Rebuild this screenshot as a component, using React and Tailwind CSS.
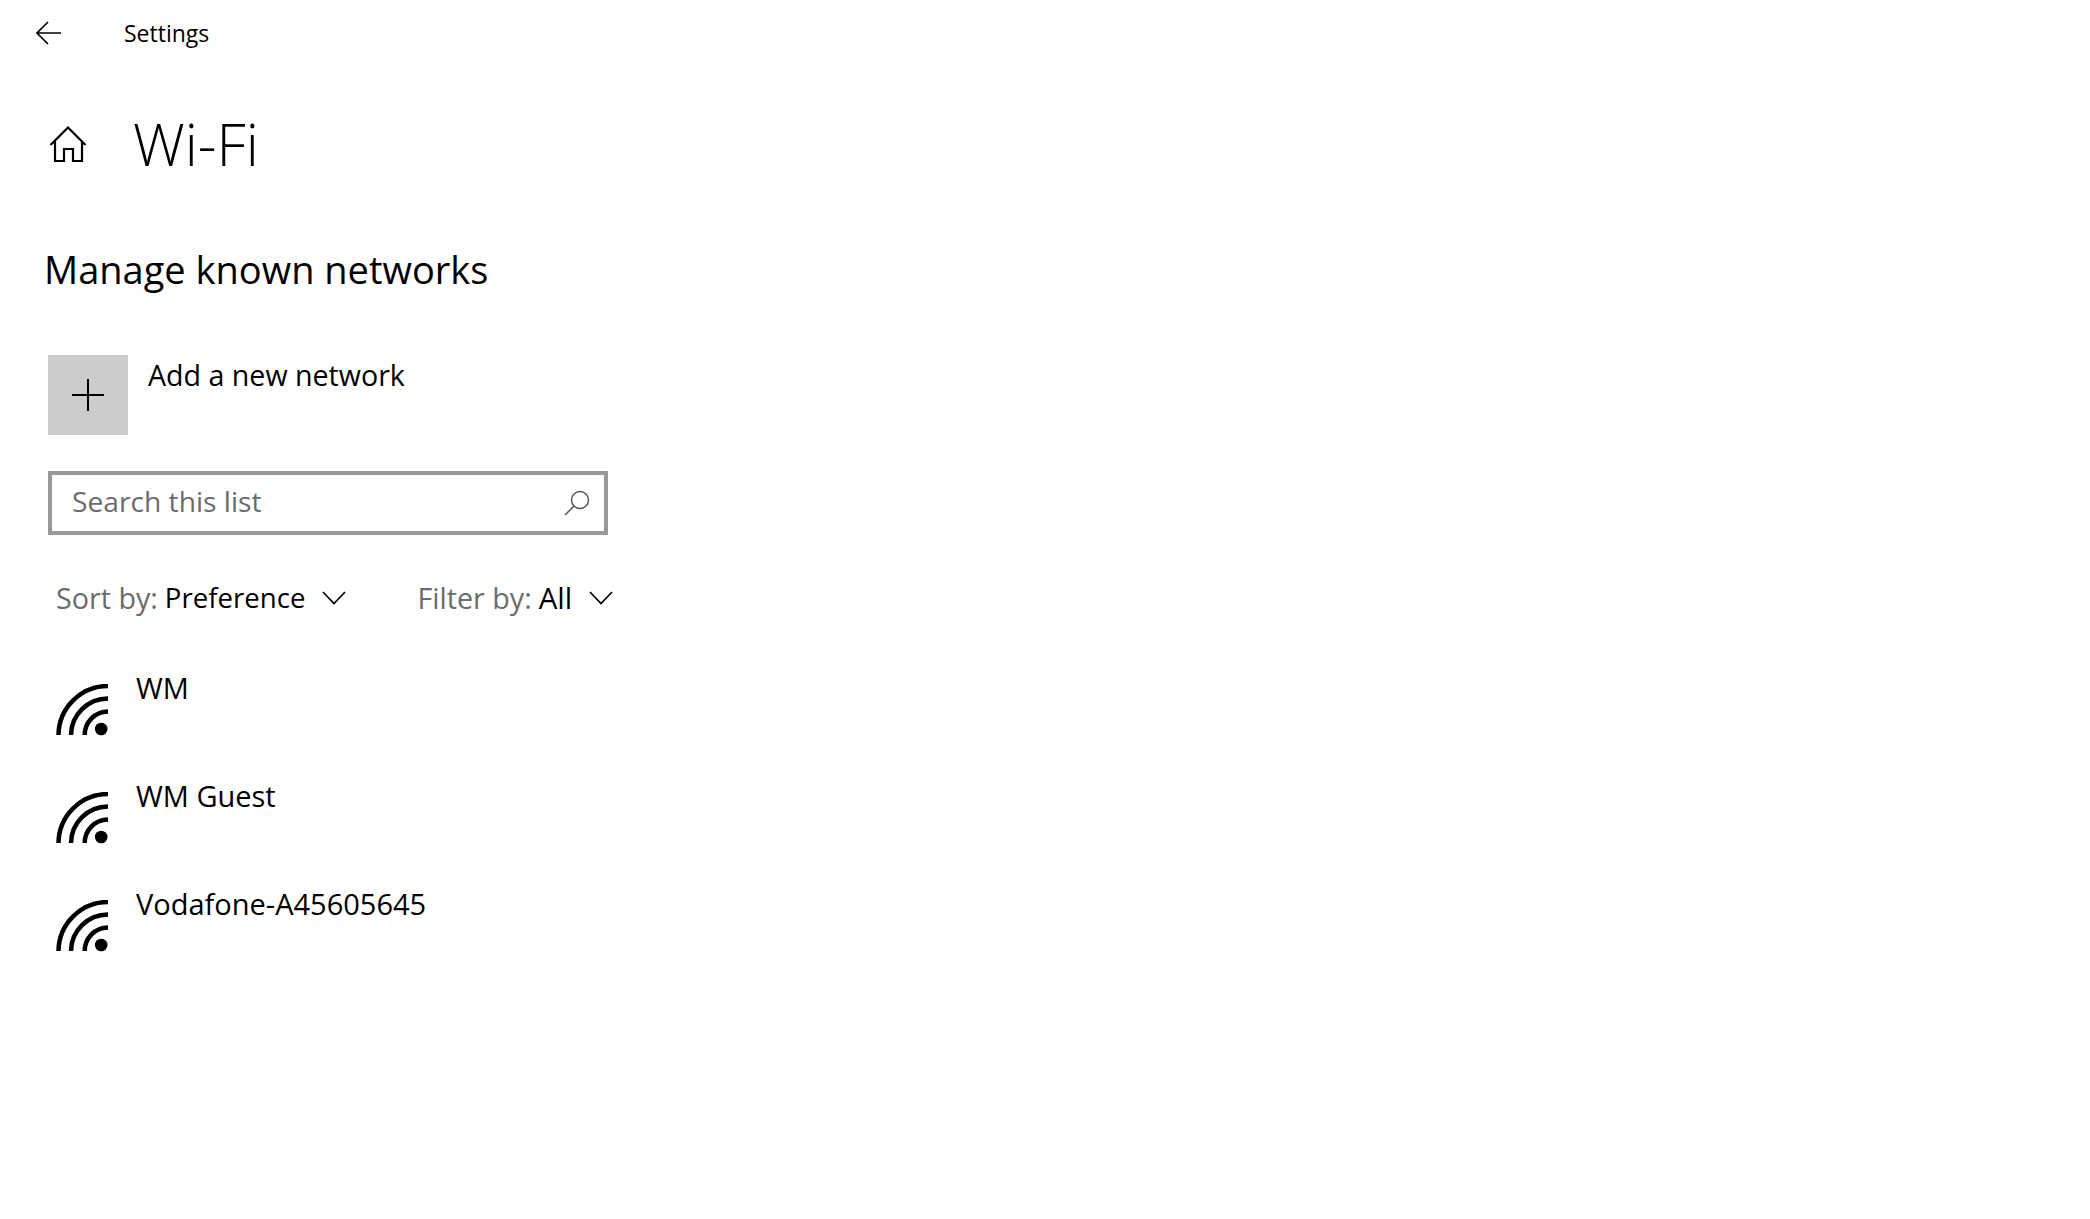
const NETWORKS = ['WM', 'WM Guest', 'Vodafone-A45605645'];

const WifiIcon = () => (
  <svg width="52" height="52" viewBox="0 0 52 52" fill="none" stroke="#000" strokeWidth="4.5" className="block shrink-0">
    <path d="M2.5 51A49.5 49.5 0 0 1 52 2" />
    <path d="M15 51A37 37 0 0 1 52 14.5" />
    <path d="M28.7 51A23.5 23.5 0 0 1 52 27.5" />
    <circle cx="45.2" cy="45" r="6.3" fill="#000" stroke="none" />
  </svg>
);

const Dropdown = ({ label, value, valueClass }) => (
  <div className="flex items-center">
    <span className="text-[28.7px] text-[#6b6b6b]">{label}</span>
    <span className={`ml-[7px] text-black ${valueClass}`}>{value}</span>
    <svg width="24" height="14" viewBox="0 0 24 14" fill="none" stroke="#000" strokeWidth="1.7" className="ml-[17px] block">
      <path d="M1 1L12 12.5L23 1" />
    </svg>
  </div>
);

export default function App() {
  return (
    <div className="h-[1219px] w-full overflow-hidden bg-white font-['Open_Sans',sans-serif] text-black">
      {/* title bar */}
      <div className="flex h-[66px] items-center pl-[36px]">
        <svg width="26" height="24" viewBox="0 0 26 24" fill="none" stroke="#000" strokeWidth="1.6" className="block">
          <path d="M1 12H25M12 1L1 12L12 23" />
        </svg>
        <span className="ml-[62px] mt-[1px] text-[23px]">Settings</span>
      </div>

      {/* page heading */}
      <div className="mt-[48px] flex h-[60px] items-center pl-[49px]">
        <svg width="38" height="38" viewBox="0 0 38 38" fill="none" stroke="#000" strokeWidth="2.2" className="block">
          <path d="M1.5 20L19 2.5L36.5 20M6 16V36H15V24H24V36H33V16" />
        </svg>
        <h1 className="ml-[46px] text-[58px] font-light leading-none">Wi-Fi</h1>
      </div>

      <div className="pl-[48px]">
        <h2 className="mt-[69px] -ml-[4px] text-[38px] leading-[52px]">Manage known networks</h2>

        <div className="mt-[60px] flex items-start">
          <div className="flex h-[80px] w-[80px] items-center justify-center bg-[#cccccc]">
            <svg width="32" height="32" viewBox="0 0 32 32" stroke="#000" strokeWidth="2" className="block">
              <path d="M0 16H32M16 0V32" />
            </svg>
          </div>
          <span className="ml-[20px] text-[28.6px] leading-[40px]">Add a new network</span>
        </div>

        <div className="mt-[36px] flex h-[64px] w-[560px] items-center justify-between border-4 border-[#999999] pl-[20px] pr-[14px]">
          <span className="mb-[4px] text-[28.2px] text-[#6b6b6b]">Search this list</span>
          <svg width="26" height="26" viewBox="0 0 26 26" fill="none" stroke="#555" strokeWidth="1.5" className="block">
            <circle cx="16" cy="10" r="8.5" />
            <path d="M10 16L1 25" />
          </svg>
        </div>

        <div className="mt-[39px] flex h-[48px] items-center pl-[8px]">
          <Dropdown label="Sort by:" value="Preference" valueClass="text-[27.6px]" />
          <div className="ml-[71px]">
            <Dropdown label="Filter by:" value="All" valueClass="text-[29.5px]" />
          </div>
        </div>

        <div className="mt-[45px] pl-[8px]">
          {NETWORKS.map((name) => (
            <div key={name} className="flex h-[108px] items-start">
              <div className="mt-[17px]"><WifiIcon /></div>
              <span className="ml-[28px] mt-[1px] text-[29px] leading-[40px]">{name}</span>
            </div>
          ))}
        </div>
      </div>
    </div>
  );
}
